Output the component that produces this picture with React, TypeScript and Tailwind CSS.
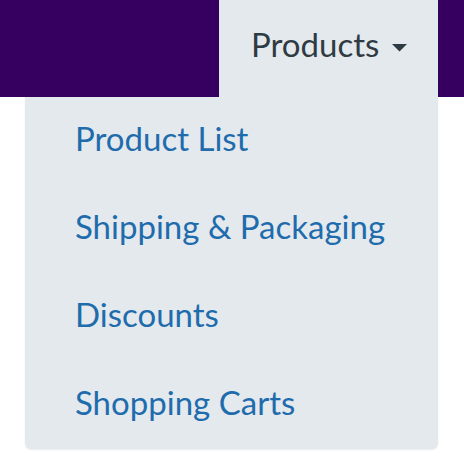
import React from "react";

const items = ["Product List", "Shipping & Packaging", "Discounts", "Shopping Carts"];

const App: React.FC = () => {
  return (
    <div
      className="w-[464px] h-[474px] bg-white overflow-hidden"
      style={{ fontFamily: "Lato, 'Open Sans', sans-serif" }}
    >
      <header className="h-[97px] bg-[#350060] flex justify-end pr-[26px]">
        <button className="w-[219px] h-[97px] bg-[#e4e9ee] flex items-start pt-[22px] pl-[32px] text-[33px] leading-[44px] text-[#2f3b42]">
          Products
          <svg className="ml-[13px] mt-[22px]" width="15" height="8" viewBox="0 0 15 8">
            <path d="M0 0 L15 0 L7.5 7.5 Z" fill="#2f3b42" />
          </svg>
        </button>
      </header>
      <nav className="ml-[25px] mr-[26px] bg-[#e4e9ee] rounded-b-md shadow-[0_1px_2px_rgba(0,0,0,0.08)]">
        <ul>
          {items.map((item) => (
            <li key={item} className="pl-[50px] h-[88px] pb-[7px] flex items-center">
              <a href="#" className="text-[33px] leading-[40px] text-[#1f6cad]">
                {item}
              </a>
            </li>
          ))}
        </ul>
      </nav>
    </div>
  );
};

export default App;
